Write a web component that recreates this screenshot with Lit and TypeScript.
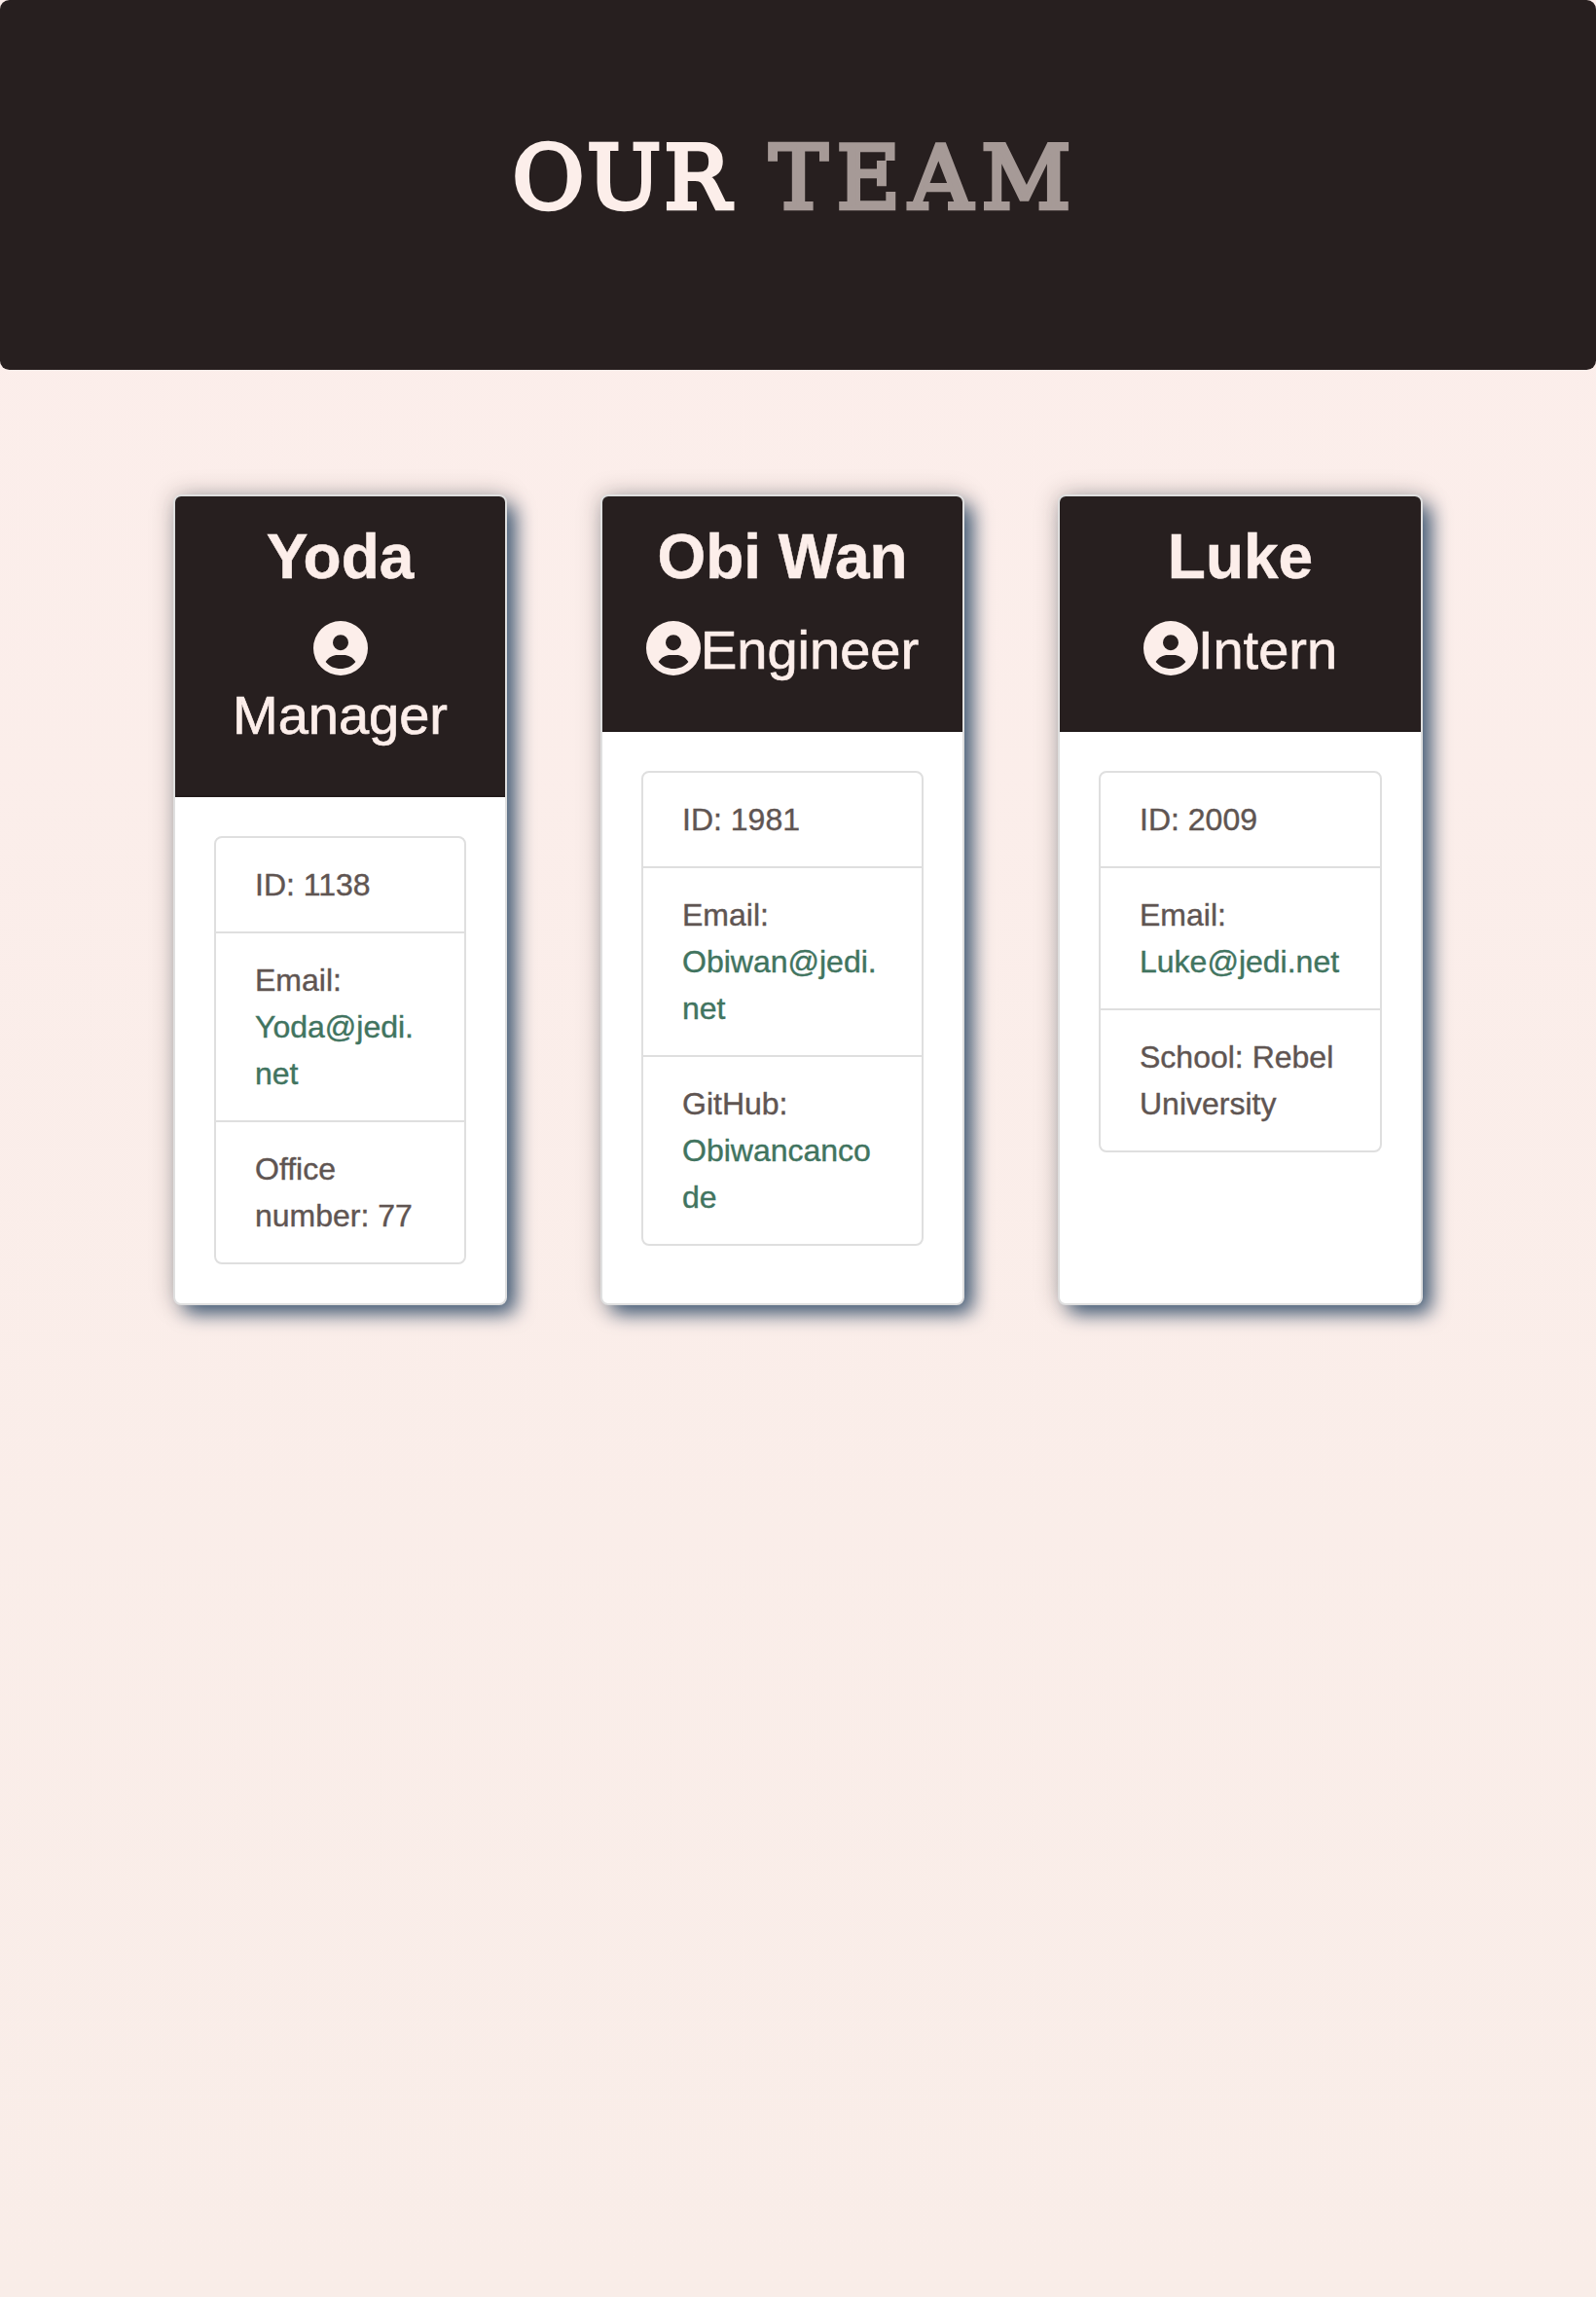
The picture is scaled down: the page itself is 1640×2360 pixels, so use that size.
import { LitElement, html, css, svg } from "lit";
import { customElement, property } from "lit/decorators.js";

interface Detail {
  label: string;
  value: string;
  link?: boolean;
}

interface Member {
  name: string;
  role: string;
  details: Detail[];
}

const team: Member[] = [
  {
    name: "Yoda",
    role: "Manager",
    details: [
      { label: "ID", value: "1138" },
      { label: "Email", value: "Yoda@jedi.net", link: true },
      { label: "Office number", value: "77" },
    ],
  },
  {
    name: "Obi Wan",
    role: "Engineer",
    details: [
      { label: "ID", value: "1981" },
      { label: "Email", value: "Obiwan@jedi.net", link: true },
      { label: "GitHub", value: "Obiwancancode", link: true },
    ],
  },
  {
    name: "Luke",
    role: "Intern",
    details: [
      { label: "ID", value: "2009" },
      { label: "Email", value: "Luke@jedi.net", link: true },
      { label: "School", value: "Rebel University" },
    ],
  },
];

@customElement("member-card")
export class MemberCard extends LitElement {
  @property({ attribute: false }) member!: Member;

  static styles = css`
    :host {
      display: flex;
      flex-direction: column;
      box-sizing: border-box;
      background: #fff;
      border: 2px solid #dfdfdf;
      border-radius: 8px;
      box-shadow: 10px 10px 20px -2px #405a76, 0 0 24px rgba(39, 31, 31, 0.28);
    }
    .head {
      padding: 24px 40px;
      text-align: center;
      color: #fceeea;
      background: #271f1f;
      border-bottom: 2px solid #221b1b;
      border-radius: 6px 6px 0 0;
    }
    .name {
      margin: 0 0 16px;
      font-size: 64px;
      line-height: 76.8px;
      font-weight: 700;
      -webkit-text-stroke: 0.5px currentColor;
    }
    .role {
      margin: 0 0 16px;
      padding: 6.8px 0 9px;
      font-size: 56px;
      line-height: 67.2px;
      font-weight: 400;
      -webkit-text-stroke: 0.7px currentColor;
    }
    .icon {
      display: inline-block;
      width: 56px;
      height: 56px;
      margin: -10px 0;
      vertical-align: 3px;
      fill: currentColor;
      stroke: none;
    }
    .body {
      flex: 1;
      padding: 40px;
    }
    .list {
      margin: 0;
      padding: 0;
      list-style: none;
      border: 2px solid #dfdfdf;
      border-radius: 8px;
    }
    .item {
      padding: 24px 40px;
      font-size: 32px;
      line-height: 48px;
      color: #5f5552;
      overflow-wrap: anywhere;
      -webkit-text-stroke: 0.4px currentColor;
    }
    .item + .item {
      border-top: 2px solid #dfdfdf;
    }
    .link {
      color: #41745f;
      text-decoration: none;
      -webkit-text-stroke-color: #41745f;
    }
  `;

  private icon() {
    return html`<svg class="icon" viewBox="0 0 56 56" aria-hidden="true">
      ${svg`<path fill-rule="evenodd" d="M28 0a28 28 0 1 0 0 56a28 28 0 0 0 0-56zM28 14.2a8 8 0 1 1 0 16a8 8 0 0 1 0-16zM12.6 42C16 37 20 35 25 35H31C36 35 40 37 43.4 42C39 47 34 49 28 49C22 49 17 47 12.6 42z"/>`}
    </svg>`;
  }

  render() {
    const m = this.member;
    return html`
      <div class="head">
        <h2 class="name">${m.name}</h2>
        <h3 class="role">${this.icon()}<wbr />${m.role}</h3>
      </div>
      <div class="body">
        <ul class="list">
          ${m.details.map((d) =>
            d.link
              ? html`<li class="item">${`${d.label}: `}<a class="link">${d.value}</a></li>`
              : html`<li class="item">${`${d.label}: ${d.value}`}</li>`
          )}
        </ul>
      </div>
    `;
  }
}

@customElement("app-root")
export class AppRoot extends LitElement {
  static styles = css`
    :host {
      display: block;
      box-sizing: border-box;
      min-height: 2360px;
      background: linear-gradient(#fceeeb, #f9ede8);
      font-family: "Liberation Sans", Arial, sans-serif;
    }
    .banner {
      box-sizing: border-box;
      height: 380px;
      padding: 125px 4px 0 0;
      border-radius: 9.6px;
      background: #271f1f;
      text-align: center;
    }
    .title {
      margin: 0;
      font-family: "DejaVu Serif", serif;
      font-size: 90px;
      line-height: 116px;
      font-weight: 400;
      letter-spacing: 3px;
      word-spacing: 6px;
      color: #fceeea;
      -webkit-text-stroke: 4.5px currentColor;
    }
    .accent {
      color: #a69a97;
      letter-spacing: 9px;
    }
    .team {
      display: grid;
      grid-template-columns: 343px 374px 375px;
      gap: 96px;
      padding: 128px 178px 0;
    }
  `;

  render() {
    return html`
      <header class="banner">
        <h1 class="title">OUR <span class="accent">TEAM</span></h1>
      </header>
      <main class="team">
        ${team.map((m) => html`<member-card .member=${m}></member-card>`)}
      </main>
    `;
  }
}
